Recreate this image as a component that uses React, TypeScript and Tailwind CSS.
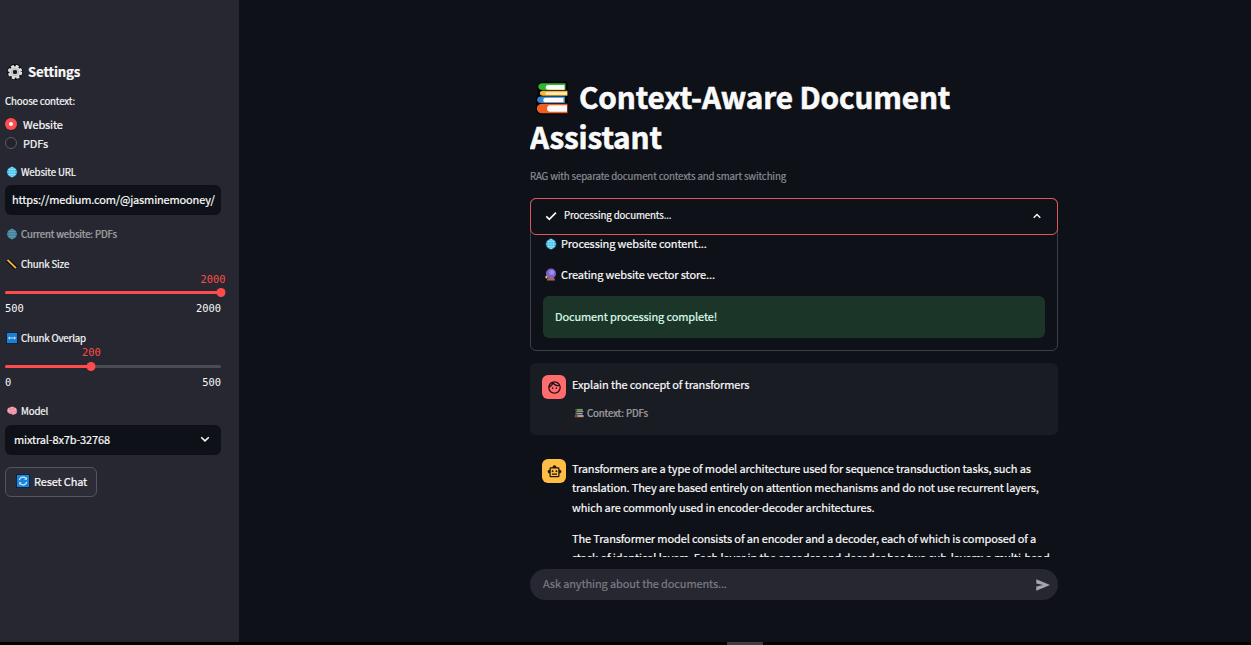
import React from "react";

type IconProps = { className?: string };

function Gear({ className }: IconProps) {
  return (
    <svg viewBox="0 0 16 16" className={className}>
      <circle cx="8" cy="8" r="6.6" fill="none" stroke="#0a0a0c" strokeWidth="2.6" />
      <circle cx="8" cy="8" r="6" fill="none" stroke="#e2e2e2" strokeWidth="2.4" strokeDasharray="3 1.71" />
      <circle cx="8" cy="8" r="4" fill="none" stroke="#dedede" strokeWidth="3.4" />
      <circle cx="8" cy="8" r="3.7" fill="none" stroke="#a5a5a5" strokeWidth="0.7" />
      <circle cx="8" cy="8" r="1.6" fill="#15151a" />
    </svg>
  );
}

function Globe({ className }: IconProps) {
  return (
    <svg viewBox="0 0 12 12" className={className}>
      <circle cx="6" cy="6" r="5.3" fill="#2fb4e6" stroke="#12262f" strokeWidth="0.6" />
      <g fill="none" stroke="#b5ecfb" strokeWidth="0.65">
        <ellipse cx="6" cy="6" rx="2.3" ry="4.9" />
        <path d="M6 1v10M1 6h10M1.9 3.4h8.2M1.9 8.6h8.2" />
      </g>
    </svg>
  );
}

function Ruler({ className }: IconProps) {
  return (
    <svg viewBox="0 0 12 12" className={className}>
      <path d="M1.500 2 10.200 10.300" stroke="#0b0b0d" strokeWidth="4" />
      <path d="M1.500 1.900 10 10.100" stroke="#f0b43c" strokeWidth="2" />
    </svg>
  );
}

function Arrows({ className }: IconProps) {
  return (
    <svg viewBox="0 0 12 12" className={className}>
      <rect x="0.4" y="0.4" width="11.2" height="11.2" fill="#1c7fd6" stroke="#0d1622" strokeWidth="0.8" />
      <path d="M2.5 6h7M4 4.8 2.7 6 4 7.2M8 4.8 9.3 6 8 7.2" fill="none" stroke="#d6f0ff" strokeWidth="0.9" />
    </svg>
  );
}

function Brain({ className }: IconProps) {
  return (
    <svg viewBox="0 0 12 12" className={className}>
      <path
        d="M1 6.5C.4 4 2 2.400 3.700 2.300 5 .9 7.300 1.100 8.300 2.100 10.400 2.200 11.600 4.500 11.200 6.400 11.500 8.300 10 9.600 8.600 9.300 8 10.600 6.400 10.300 5.800 9.300 4 9.600 3.200 8.900 3 8.300 1.900 8.300 1.200 7.500 1 6.500Z"
        fill="#f5a3b4"
        stroke="#1b1013"
        strokeWidth="0.6"
      />
      <path d="M3 4.500c1-.8 2 0 2.200.8M6 3c.2 1.300 1.500 1.200 2.300 1M4 7c1 .6 2.500.4 3-.8M8 6c.6.9 1.600.8 2.300.3M7.500 8.300 8.600 9.300" fill="none" stroke="#c9647d" strokeWidth="0.6" />
    </svg>
  );
}

function Cycle({ className }: IconProps) {
  return (
    <svg viewBox="0 0 14 14" className={className}>
      <rect x="0.400" y="0.400" width="13.200" height="13.200" fill="#1b83dc" stroke="#0c1420" strokeWidth="0.8" />
      <path d="M3.300 6A3.800 3.800 0 0 1 9.800 4.300M10.700 8A3.800 3.800 0 0 1 4.200 9.700" fill="none" stroke="#c9f0ff" strokeWidth="1.200" />
      <path d="M10.900 3.100v2.700H8.200zM3.100 10.900v-2.700h2.700z" fill="#c9f0ff" />
    </svg>
  );
}

function Books({ className }: IconProps) {
  return (
    <svg viewBox="0 0 34 34" className={className}>
      <path d="M5 1.500 10 .5H31.500L33 3V31.500L31 33.500H5L1 30V22L.8 17 3 13 2 6Z" fill="#050506" />
      <path d="M7.500 2.200H30.500V9H7.500C1.800 9 1.800 2.200 7.500 2.200Z" fill="#2fb52f" />
      <path d="M13 4H29.500V8.800H13C10 8.800 10 4 13 4Z" fill="#fbfbfb" />
      <path d="M8 9.800H32.500V14.800H8C3.800 14.800 3.800 9.800 8 9.800Z" fill="#f6b432" />
      <path d="M12 11.200H32V13.800H12C9.800 13.800 9.800 11.200 12 11.200Z" fill="#fff1c4" />
      <path d="M6 15.400H30V22H6C.8 22 .8 15.400 6 15.400Z" fill="#3487d2" />
      <path d="M10.500 16.700H28.500V21.300H10.500C7.500 21.300 7.500 16.700 10.500 16.700Z" fill="#fbfbfb" />
      <path d="M7 22.700H32.500V32.300H7C.1 32.300.1 22.700 7 22.700Z" fill="#ef5f22" />
      <path d="M15 24.200H32V30.800H15C11 30.800 11 24.200 15 24.200Z" fill="#fbfbfb" />
    </svg>
  );
}

function CrystalBall({ className }: IconProps) {
  return (
    <svg viewBox="0 0 12 13" className={className}>
      <path d="M3 9.500h6l1.200 3H1.800Z" fill="#a06a55" />
      <circle cx="6" cy="5.500" r="5" fill="#7e62cc" />
      <circle cx="6.800" cy="4.400" r="2.500" fill="#a08be6" />
      <path d="M1.300 7.200 1.900 8.500 3.200 9.100 1.900 9.700 1.300 11 .7 9.700 0 9.100.7 8.500Z" fill="#ffd75e" />
    </svg>
  );
}

function Face({ className }: IconProps) {
  return (
    <svg viewBox="0 0 24 24" className={className} fill="#1c1014">
      <path d="M10.250 13c0 .690-.560 1.250-1.250 1.250S7.750 13.690 7.750 13s.560-1.250 1.250-1.250 1.250.560 1.250 1.250zM15 11.750c-.690 0-1.250.560-1.250 1.250s.560 1.250 1.250 1.250 1.250-.560 1.250-1.250-.560-1.250-1.250-1.250zm7 .250c0 5.520-4.480 10-10 10S2 17.520 2 12 6.480 2 12 2s10 4.480 10 10zM10.660 4.120C12.060 6.440 14.600 8 17.500 8c.460 0 .910-.050 1.340-.120C17.440 5.560 14.900 4 12 4c-.460 0-.910.050-1.340.120zM4.420 9.470c1.710-.970 3.030-2.550 3.660-4.440C6.370 6 5.050 7.580 4.420 9.470zM20 12c0-.780-.120-1.530-.330-2.240-.700.150-1.420.240-2.170.240-3.130 0-5.920-1.440-7.760-3.690C8.690 8.870 6.600 10.880 4 11.860c.010.040 0 .090 0 .140 0 4.410 3.590 8 8 8s8-3.590 8-8z" />
    </svg>
  );
}

function Robot({ className }: IconProps) {
  return (
    <svg viewBox="0 0 24 24" className={className} fill="#1d160c">
      <path d="M20 9V7c0-1.100-.900-2-2-2h-3c0-1.660-1.340-3-3-3S9 3.340 9 5H6c-1.100 0-2 .900-2 2v2c-1.660 0-3 1.340-3 3s1.340 3 3 3v4c0 1.100.900 2 2 2h12c1.100 0 2-.900 2-2v-4c1.660 0 3-1.340 3-3s-1.340-3-3-3zm-2 10H6V7h12v12zm-9-6c-.830 0-1.500-.670-1.500-1.500S8.170 10 9 10s1.500.670 1.500 1.500S9.830 13 9 13zm7.500-1.500c0 .830-.670 1.500-1.500 1.500s-1.500-.670-1.500-1.500.670-1.500 1.500-1.500 1.500.670 1.500 1.500zM8 15h8v2H8v-2z" />
    </svg>
  );
}

type SliderProps = { value: number; min: number; max: number; labelClass: string };

function Slider({ value, min, max, labelClass }: SliderProps) {
  const percent = ((value - min) / (max - min)) * 100;
  return (
    <div className="w-[216px] font-['DejaVu_Sans_Mono',monospace] text-[10.4px] leading-4 tracking-normal [-webkit-text-stroke:0px]">
      <div className={labelClass}>
        <span className="absolute top-0 -translate-x-1/2 text-[#ff4b4b]" style={{ left: `${percent === 100 ? 96.3 : percent}%` }}>
          {value}
        </span>
      </div>
      <div className="relative mt-1 h-[3px] rounded-full bg-[#4a4b53]">
        <div className="h-full rounded-full bg-[#ff4b4b]" style={{ width: `${percent}%` }} />
        <div className="absolute -top-[3px] size-[9px] -translate-x-1/2 rounded-full bg-[#ff4b4b]" style={{ left: `${percent}%` }} />
      </div>
      <div className="mt-[6px] flex justify-between">
        <span>{min}</span>
        <span>{max}</span>
      </div>
    </div>
  );
}

function Sidebar() {
  return (
    <aside className="flex w-[239px] shrink-0 flex-col bg-[#262730] pt-[60px] pl-[5px] text-[9.7px] leading-4 tracking-[-0.15px]">
      <h2 className="flex h-6 items-center gap-[5px] pl-[2px] text-[13.200px] font-bold">
        <Gear className="size-4" />
        Settings
      </h2>
      <div className="mt-[9px]">Choose context:</div>
      <div className="mt-[5px] flex h-[19px] items-center gap-[6px] text-[11px]">
        <span className="flex size-3 items-center justify-center rounded-full bg-[#ff4b4b]">
          <span className="size-1 rounded-full bg-white" />
        </span>
        Website
      </div>
      <div className="flex h-[19px] items-center gap-[6px] text-[11px]">
        <span className="size-3 rounded-full border border-[#5b5c65] bg-[#22232b]" />
        PDFs
      </div>
      <div className="mt-3 flex items-center gap-[3px] pl-[1px]">
        <Globe className="size-3" />
        Website URL
      </div>
      <div className="mt-[5px] flex h-[30px] w-[216px] items-center overflow-hidden rounded-md bg-[#0e1117] px-[7px] pb-[2px] text-[11px] whitespace-nowrap">
        https://medium.com/@jasminemooney/
      </div>
      <div className="mt-[11px] flex items-center gap-[3px] pl-[1px] opacity-60">
        <Globe className="size-3" />
        Current website: PDFs
      </div>
      <div className="mt-[14px] flex items-center gap-[3px] pl-[1px]">
        <Ruler className="size-3" />
        Chunk Size
      </div>
      <div className="-mt-[1px]">
        <Slider value={2000} min={500} max={2000} labelClass="relative h-4" />
      </div>
      <div className="mt-[14px] flex items-center gap-[3px] pl-[1px]">
        <Arrows className="size-3" />
        Chunk Overlap
      </div>
      <div className="-mt-[1px]">
        <Slider value={200} min={0} max={500} labelClass="relative -top-px h-4" />
      </div>
      <div className="mt-[13px] flex items-center gap-[3px] pl-[1px]">
        <Brain className="size-3" />
        Model
      </div>
      <div className="mt-[6px] flex h-[30px] w-[216px] items-center justify-between rounded-md bg-[#0e1117] pr-[11px] pb-[2px] pl-[9px] text-[11px]">
        mixtral-8x7b-32768
        <svg viewBox="0 0 10 10" className="size-[10px]" fill="none" stroke="#fafafa" strokeWidth="1.500">
          <path d="M1.200 3.200 5 6.900 8.800 3.200" />
        </svg>
      </div>
      <button className="mt-3 flex h-[30px] w-[92px] items-center gap-[4px] rounded-md border border-[#54555d] bg-[#2b2c36] pb-[2px] pl-[10px] text-[11px] whitespace-nowrap">
        <Cycle className="size-[14px] shrink-0" />
        Reset Chat
      </button>
    </aside>
  );
}

function StatusPanel() {
  return (
    <section className="mt-[13px] h-[153px] rounded-md border border-[#3c3f47]">
      <div className="-mx-px -mt-px flex h-[37px] items-center rounded-md border border-[#e0575a] pr-[15px] pb-[2px] pl-[14px] text-[9.7px]">
        <svg viewBox="0 0 12 12" className="mt-px size-3" fill="none" stroke="#fafafa" strokeWidth="1.700">
          <path d="M1.300 6.300 4.300 9.300 10.900 2.700" />
        </svg>
        <span className="ml-[7px] flex-1">Processing documents...</span>
        <svg viewBox="0 0 10 10" className="size-[10px]" fill="none" stroke="#fafafa" strokeWidth="1.400">
          <path d="M1.700 6.800 5 3.500 8.300 6.800" />
        </svg>
      </div>
      <div className="-mt-px px-3">
        <div className="flex h-[19px] items-center gap-1 pl-[2px]">
          <Globe className="size-3" />
          Processing website content...
        </div>
        <div className="mt-3 flex h-[19px] items-center gap-1 pl-[2px]">
          <CrystalBall className="h-[13px] w-3" />
          Creating website vector store...
        </div>
        <div className="mt-3 flex h-[42px] items-center rounded-md bg-[#1b3629] px-3 pb-px text-[#dffde9]">
          Document processing complete!
        </div>
      </div>
    </section>
  );
}

function Conversation() {
  return (
    <>
      <div className="mt-3 flex h-[72px] gap-[6px] rounded-md bg-[#1a1c24] p-3">
        <div className="flex size-6 shrink-0 items-center justify-center rounded-md bg-[#ff6c6c]">
          <Face className="size-[15px]" />
        </div>
        <div>
          <div className="-mt-px h-5 leading-5">Explain the concept of transformers</div>
          <div className="mt-[11px] flex h-4 items-center gap-[3px] pl-[2px] text-[9.7px] opacity-60">
            <Books className="size-[10px]" />
            Context: PDFs
          </div>
        </div>
      </div>
      <div className="mt-3 flex gap-[6px] p-3">
        <div className="flex size-6 shrink-0 items-center justify-center rounded-md bg-[#ffbd45]">
          <Robot className="size-[15px]" />
        </div>
        <div className="-mt-[0.500px] leading-[19.500px] whitespace-nowrap">
          <p>
            Transformers are a type of model architecture used for sequence transduction tasks, such as
            <br />
            translation. They are based entirely on attention mechanisms and do not use recurrent layers,
            <br />
            which are commonly used in encoder-decoder architectures.
          </p>
          <p className="mt-[12.250px] leading-[19px]">
            The Transformer model consists of an encoder and a decoder, each of which is composed of a
            <br />
            stack of identical layers. Each layer in the encoder and decoder has two sub-layers: a multi-head
          </p>
        </div>
      </div>
    </>
  );
}

export default function App() {
  return (
    <div className="flex h-[645px] w-[1251px] flex-col overflow-hidden bg-black font-['Noto_Sans_CJK_JP',sans-serif] text-[11px] font-normal tracking-[-0.12px] text-[#fafafa] [-webkit-text-stroke:0.2px]">
      <div className="flex h-[642px] shrink-0">
        <Sidebar />
        <main className="flex flex-1 flex-col bg-[#0e1117] pl-[291px]">
          <div className="h-[557px] w-[528px] shrink-0 overflow-hidden pt-[77px]">
            <h1 className="text-[29.700px] leading-10 font-bold whitespace-nowrap [-webkit-text-stroke:0.6px]">
              <span className="flex items-center gap-[10px] pl-[5px]">
                <Books className="mt-[2px] size-[34px]" />
                Context-Aware Document
              </span>
              Assistant
            </h1>
            <p className="mt-[11px] h-[17px] text-[9.700px] leading-[17px] tracking-[-0.15px] text-[#8b8d93]">
              RAG with separate document contexts and smart switching
            </p>
            <StatusPanel />
            <Conversation />
          </div>
          <div className="mt-3 flex h-[31px] w-[528px] shrink-0 items-center justify-between rounded-full bg-[#262730] pr-[7px] pb-[2px] pl-[13px] text-[#7b7c84]">
            Ask anything about the documents...
            <svg viewBox="0 0 16 14" className="mt-[3px] h-[14px] w-4" fill="#a4a5ae">
              <path d="M1.300 1.200 15 7 1.300 12.800V8.500L8 7 1.300 5.500Z" />
            </svg>
          </div>
        </main>
      </div>
      <div className="ml-[727px] h-[3px] w-9 bg-[#403f40]" />
    </div>
  );
}
